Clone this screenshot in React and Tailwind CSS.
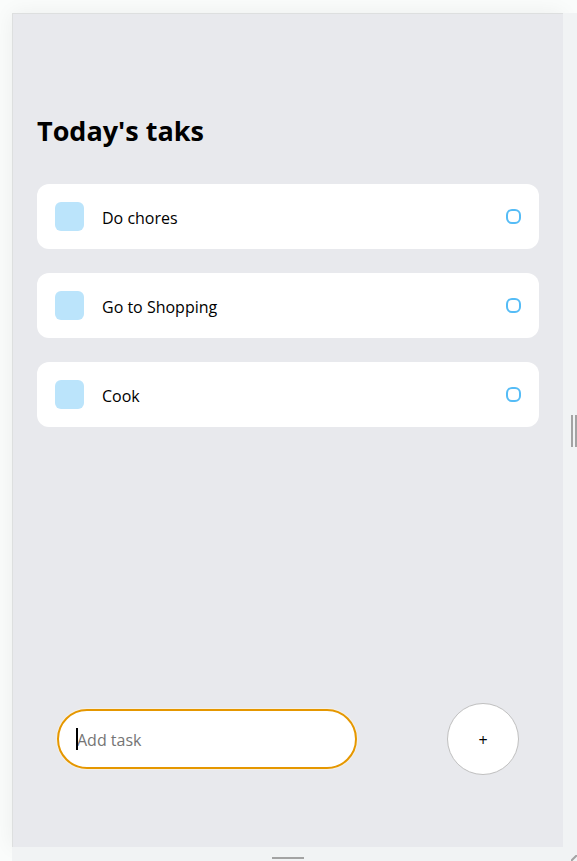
import { useState } from "react";

const initialTasks = ["Do chores", "Go to Shopping", "Cook"];

function Task({ text }) {
  return (
    <li>
      <label className="flex h-[65px] items-center rounded-xl bg-white px-[18px] text-base text-black">
        <span className="mr-[18px] size-[29px] rounded-md bg-[#bbe4fb]" />
        <span className="flex-1 pt-[2px]">{text}</span>
        <input
          type="checkbox"
          className="size-[15px] appearance-none rounded-[6px] border-2 border-[#55bcf6] checked:bg-[#55bcf6]"
        />
      </label>
    </li>
  );
}

function AddTask({ onAdd }) {
  const [value, setValue] = useState("");

  function submit(event) {
    event.preventDefault();
    if (value.trim()) {
      onAdd(value.trim());
      setValue("");
    }
  }

  return (
    <form
      onSubmit={submit}
      className="mt-auto mb-[72px] flex items-center justify-between px-[44px]"
    >
      <div className="relative">
        <input
          aria-label="Add task"
          placeholder="Add task"
          value={value}
          onChange={(event) => setValue(event.target.value)}
          className="block h-[60px] w-[300px] rounded-full border-2 border-[#e59700] bg-white px-[18px] pt-[2px] text-base text-black caret-transparent ring-1 ring-[#f6f0e4] outline-none placeholder:text-[#757575]"
        />
        {value === "" && (
          <span className="pointer-events-none absolute top-[19px] left-[19px] h-[22px] w-[2px] bg-black" />
        )}
      </div>
      <button
        type="submit"
        aria-label="Add"
        className="size-[72px] rounded-full border border-[#c0c0c0] bg-white pt-[2px] text-base text-black"
      >
        +
      </button>
    </form>
  );
}

export default function App() {
  const [tasks, setTasks] = useState(initialTasks);

  return (
    <div className="flex min-h-screen flex-col overflow-hidden bg-[#fafcfb] pt-[13px] pl-[12px] font-['Open_Sans','Noto_Sans',sans-serif]">
      <div className="flex flex-1">
        <main className="flex flex-1 flex-col border-t border-l border-[#dddfdf] bg-[#e8e9ed] shadow-[0_0_20px_rgba(0,0,0,0.06)]">
          <section className="px-6 pt-[98px]">
            <h1 className="text-[27px] leading-[38px] font-bold text-black">Today's taks</h1>
            <ul className="mt-[34px] flex flex-col gap-6">
              {tasks.map((task, index) => (
                <Task key={index} text={task} />
              ))}
            </ul>
          </section>
          <AddTask onAdd={(task) => setTasks([...tasks, task])} />
        </main>
        <div className="flex w-[14px] items-center justify-end gap-[2px] bg-[#f1f3f4] pt-[2px]">
          <span className="h-8 w-[2px] bg-[#a3a3a3]" />
          <span className="h-8 w-[2px] bg-[#a3a3a3]" />
        </div>
      </div>
      <div className="flex h-[14px] items-end bg-[#f1f3f4]">
        <div className="flex h-[4px] flex-1 justify-center pr-2">
          <span className="h-[2px] w-8 bg-[#a3a3a3]" />
        </div>
        <svg className="size-[6px]" viewBox="0 0 6 6" aria-hidden="true">
          <path d="M0 6 6 0" stroke="#a3a3a3" strokeWidth="2" />
        </svg>
      </div>
    </div>
  );
}
